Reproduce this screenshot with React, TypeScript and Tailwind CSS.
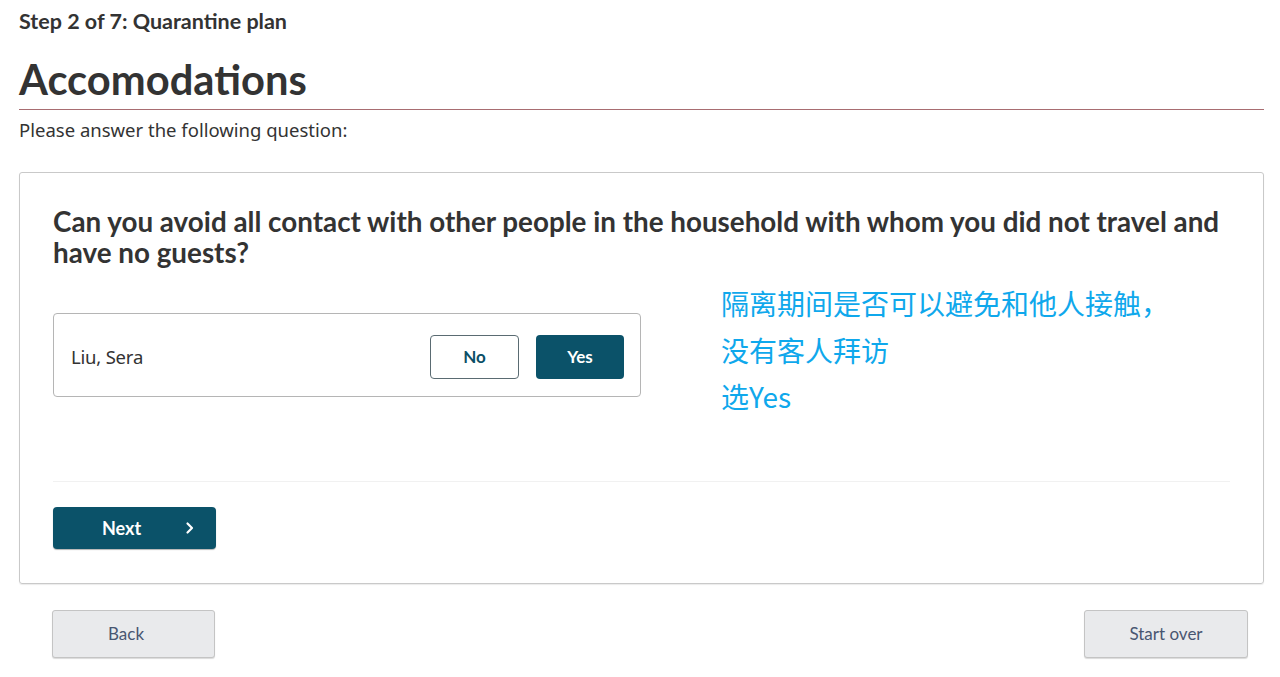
import React from 'react';

const ChevronRight = () => (
  <svg width="12" height="14" viewBox="0 0 12 14" fill="none">
    <path d="M3.5 2.5 L8 7 L3.5 11.5" stroke="white" strokeWidth="2.2" strokeLinecap="round" strokeLinejoin="round" />
  </svg>
);

export default function App() {
  return (
    <div className="min-h-screen bg-white pl-[19px] pr-[16px] pt-[8px] font-['Noto_Sans','Open_Sans',sans-serif] text-[#333333]">
      {/* Step header */}
      <div className="font-['Lato',sans-serif] text-[21.5px] font-bold leading-[26px]">
        Step 2 of 7: Quarantine plan
      </div>
      <h1 className="mt-[22px] font-['Lato',sans-serif] text-[41.7px] font-bold leading-[46px]">
        Accomodations
      </h1>
      <div className="mt-[7px] h-px bg-[#a86d71]" />
      <p className="mt-[8px] text-[18.5px] leading-[24px]">Please answer the following question:</p>

      {/* Question card */}
      <div className="mt-[30px] rounded-[3px] border border-[#c9c9c9] px-[33px] pt-[33px] pb-[34px] shadow-[0_1px_1px_rgba(0,0,0,0.08)]">
        <h2 className="font-['Lato',sans-serif] text-[27.8px] font-bold leading-[31px]">
          Can you avoid all contact with other people in the household with whom you did not travel and have no guests?
        </h2>

        <div className="mt-[45px] flex h-[84px] items-start">
          <div className="flex h-[84px] w-[588px] shrink-0 items-center rounded-[4px] border border-[#b5b5b5] pl-[17px] pr-[16px] pt-[3px]">
            <span className="flex-1 text-[18.5px] tracking-[-0.2px]">Liu, Sera</span>
            <button className="flex h-[44px] w-[89px] items-center justify-center rounded-[4px] border border-[#5a6b72] bg-white font-['Lato',sans-serif] text-[17px] font-bold text-[#0b4f66]">
              No
            </button>
            <button className="ml-[17px] flex h-[44px] w-[88px] items-center justify-center rounded-[4px] bg-[#0b5269] font-['Lato',sans-serif] text-[17px] font-bold text-white">
              Yes
            </button>
          </div>
          <div className="ml-[80px] -mt-[33px] font-['Noto_Sans_CJK_SC','Noto_Sans',sans-serif] text-[28px] leading-[46.5px] text-[#0fa8ec]">
            <div>隔离期间是否可以避免和他人接触，</div>
            <div>没有客人拜访</div>
            <div>选Yes</div>
          </div>
        </div>

        <div className="mt-[84px] h-px bg-[#f1f1f1]" />

        <button className="mt-[25px] flex h-[42px] w-[163px] items-center rounded-[4px] bg-[#0b5269] pl-[49px] font-['Lato',sans-serif] text-[18px] font-bold text-white shadow-[0_1px_1px_rgba(0,0,0,0.3)]">
          <span>Next</span>
          <span className="ml-[43px] flex items-center">
            <ChevronRight />
          </span>
        </button>
      </div>

      {/* Footer nav */}
      <div className="mt-[26px] flex justify-between pl-[33px] pr-[16px]">
        <button className="flex h-[48px] w-[163px] items-center justify-center rounded-[3px] border border-[#c4c4c4] bg-[#e9eaec] pr-[15px] font-['Lato',sans-serif] text-[17px] text-[#485671] shadow-[0_1px_1px_rgba(0,0,0,0.15)]">
          Back
        </button>
        <button className="flex h-[48px] w-[164px] items-center justify-center rounded-[3px] border border-[#c4c4c4] bg-[#e9eaec] font-['Lato',sans-serif] text-[17px] text-[#485671] shadow-[0_1px_1px_rgba(0,0,0,0.15)]">
          Start over
        </button>
      </div>
    </div>
  );
}
